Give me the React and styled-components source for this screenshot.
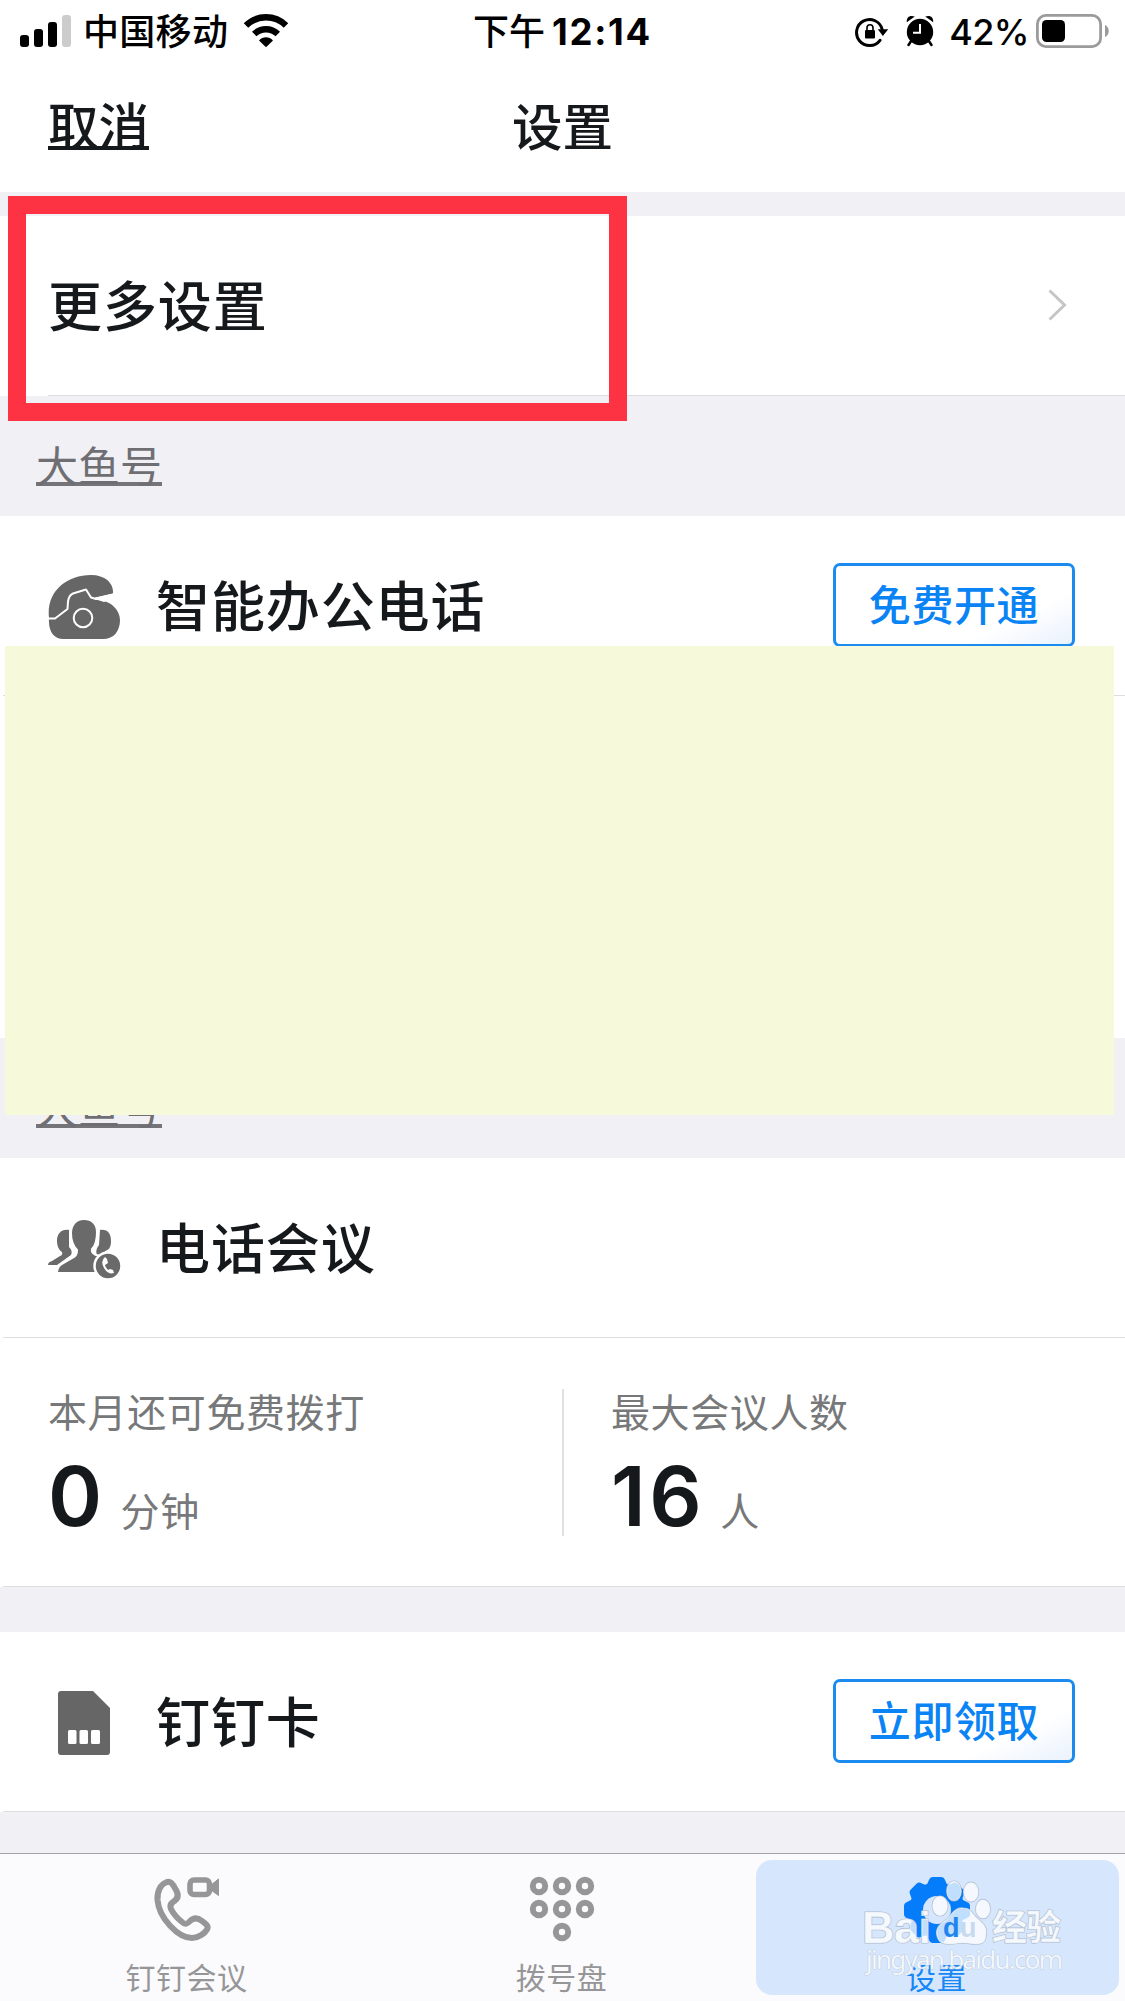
import styled, { createGlobalStyle } from "styled-components"

const GlobalStyle = createGlobalStyle`
    *{
        box-sizing: border-box;
        margin: 0;
        padding: 0;
    }

    body{
        background-color: #f0f0f5;
        color: #16191c;
        font-family: Inter, "Noto Sans CJK SC", sans-serif;
        overflow: hidden;
    }
`

const Screen = styled.div`
    position: relative;
    width: 1125px;
    height: 2001px;
    overflow: hidden;
    display: flex;
    flex-direction: column;
    background-color: #f0f0f5;

    svg{
        display: block;
        flex-shrink: 0;
    }
`

const StatusBar = styled.header`
    height: 60px;
    display: grid;
    grid-template-columns: 1fr auto 1fr;
    background-color: #fff;
    color: #000;
    font-size: 36px;
    font-weight: 500;
    line-height: 60px;
    white-space: nowrap;
`

const StatusSide = styled.div`
    display: flex;
    align-items: center;
    justify-content: ${({ $end }) => $end ? "flex-end" : "flex-start"};
    padding: ${({ $end }) => $end ? "0 15px 0 0" : "0 0 0 20px"};
`

const Carrier = styled.span`
    width: 146px;
    margin: 0 14px 0 11px;
    padding-top: 2px;
    letter-spacing: .3px;
`

const Clock = styled.div`
    display: flex;
    gap: 7px;
    padding-top: 2px;

    b{
        font-size: 36.5px;
        font-weight: 700;
        letter-spacing: 1.7px;
    }
`

const Battery = styled.span`
    margin: 0 7px 0 15px;
    padding-top: 2px;
    font-size: 36px;
    letter-spacing: -.6px;
`

const NavBar = styled.nav`
    height: 132px;
    display: grid;
    grid-template-columns: 1fr auto 1fr;
    padding: 0 48px;
    background-color: #fff;
    font-size: 50.5px;
    font-weight: 500;
    line-height: 136px;

    h1{
        font-size: 50.5px;
        font-weight: 500;
    }
`

const Cancel = styled.a`
    justify-self: start;
    align-self: start;
    height: 59px;
    margin-top: 31px;
    line-height: 72px;
    border-bottom: 4px solid #16191c;
`

const Gap = styled.div`
    height: ${({ $size }) => $size}px;
    flex-shrink: 0;
`

const Row = styled.div`
    height: 180px;
    display: flex;
    align-items: center;
    flex-shrink: 0;
    padding: 0 50px 0 48px;
    background: linear-gradient(#dedee0, #dedee0) ${({ $inset }) => $inset}px 179px / 100% 1px no-repeat #fff;
`

const RowTitle = styled.h2`
    flex: 1;
    margin-left: ${({ $icon }) => $icon ? "35px" : "0"};
    padding-top: 3px;
    font-size: 54px;
    font-weight: 500;
    letter-spacing: .9px;
    line-height: 80px;
`

const IconSlot = styled.div`
    width: 73px;
    display: flex;
    justify-content: center;
    padding-top: 1px;
`

const OutlineButton = styled.button`
    width: 242px;
    height: 84px;
    margin-bottom: 2px;
    border: 3px solid #1b8bf0;
    border-radius: 7px;
    background: linear-gradient(155deg, #fff 72%, #eaf2fd 100%);
    color: #0a84f5;
    font-family: inherit;
    font-size: 42px;
    font-weight: 500;
    letter-spacing: .6px;
    line-height: 76px;
    padding-top: 2px;
`

const SectionHead = styled.div`
    height: 120px;
    flex-shrink: 0;
    padding: 40px 36px 0;

    span{
        display: inline-block;
        height: 50px;
        border-bottom: 4px solid #747479;
        color: #6e6e73;
        font-size: 42px;
        line-height: 62px;
    }
`

const HiddenPanel = styled.div`
    height: 342px;
    flex-shrink: 0;
    background-color: #fff;
`

const Stats = styled.div`
    height: 249px;
    flex-shrink: 0;
    display: flex;
    align-items: center;
    padding-bottom: 1px;
    background: linear-gradient(#dedee0, #dedee0) 3px 248px / 100% 1px no-repeat #fff;
`

const Stat = styled.div`
    width: 562px;
    height: 147px;
    padding-left: 48px;

    & + &{
        padding-left: 47px;
        border-left: 2px solid #e0e0e2;
    }

    .label{
        color: #77787a;
        font-size: 39px;
        letter-spacing: .6px;
        line-height: 48px;
    }

    .value{
        display: flex;
        align-items: baseline;
        gap: 15px;
        height: 99px;
        line-height: 119px;
    }

    b{
        font-size: 82px;
        font-weight: 600;
        letter-spacing: 3.5px;
    }

    small{
        color: #77787a;
        font-size: 39px;
        letter-spacing: .6px;
    }
`

const TabBar = styled.footer`
    height: 148px;
    flex-shrink: 0;
    display: grid;
    grid-template-columns: repeat(3, 1fr);
    margin-top: auto;
    border-top: 1px solid #a3a3a8;
    background-color: #fbfbfd;
`

const Tab = styled.div`
    display: flex;
    flex-direction: column;
    align-items: center;
    height: 135px;
    margin: ${({ $active }) => $active ? "6px 6px 0" : "6px 0 0"};
    padding: 16px 2px 0 0;
    gap: 12px;
    border-radius: 16px;
    background-color: ${({ $active }) => $active ? "#d6e7fd" : "transparent"};
    color: ${({ $active }) => $active ? "#1787f5" : "#969698"};
    font-size: 30px;
    letter-spacing: .5px;
    line-height: 44px;
`

const Highlight = styled.div`
    position: absolute;
    left: 8px;
    top: 196px;
    width: 619px;
    height: 225px;
    border: 18px solid #fd3242;
`

const Cover = styled.div`
    position: absolute;
    left: 5px;
    top: 646px;
    width: 1109px;
    height: 469px;
    background-color: #f6f9da;
`

const Watermark = styled.svg`
    position: absolute;
    left: 856px;
    top: 1870px;
`

const SignalIcon = () => (
    <svg width="52" height="34" viewBox="0 0 52 34">
        <rect x="0" y="21" width="9" height="12" rx="3" />
        <rect x="14" y="15" width="9" height="18" rx="3" />
        <rect x="28" y="8" width="9" height="25" rx="3" />
        <rect x="42" y="1" width="9" height="32" rx="3" fill="#ccc" />
    </svg>
)

const WifiIcon = () => (
    <svg width="46" height="34" viewBox="0 0 46 34">
        <path d="M3 11.5a28.5 28.5 0 0 1 40 0" fill="none" stroke="#000" strokeWidth="6.4" />
        <path d="M11.2 20a17 17 0 0 1 23.6 0" fill="none" stroke="#000" strokeWidth="6.4" />
        <path d="M16 26.5c4-4.3 10-4.3 14 0l-6.2 6c-.5.5-1.1.5-1.6 0z" />
    </svg>
)

const LockIcon = () => (
    <svg width="51" height="34" viewBox="0 0 51 34">
        <path d="M25 26.3A13 13 0 1 1 27.2 15.5" fill="none" stroke="#000" strokeWidth="3" strokeLinecap="round" />
        <path d="M22.8 15.2H33.2L27.9 22z" />
        <rect x="10" y="16" width="10" height="8.5" rx="1.3" />
        <path d="M12 16.5v-2.700a3 3 0 0 1 6 0v2.7" fill="none" stroke="#000" strokeWidth="1.6" />
    </svg>
)

const AlarmIcon = () => (
    <svg width="28" height="34" viewBox="0 0 28 34">
        <path d="M5.5 26.5L2.5 31M22.5 26.5l3 4.5" stroke="#000" strokeWidth="2.5" strokeLinecap="round" />
        <circle cx="14" cy="18" r="13.2" />
        <path d="M.8 8.2C.3 2.500 4.5.8 8.8 2.6zM27.2 8.2C27.7 2.500 23.5.8 19.2 2.6z" />
        <path d="M.5 10L10.500 3.200M27.500 10L17.500 3.200" stroke="#fff" strokeWidth="1.4" />
        <path d="M14 10v8.800H7" fill="none" stroke="#fff" strokeWidth="2" />
    </svg>
)

const BatteryIcon = () => (
    <svg width="74" height="34" viewBox="0 0 74 34">
        <rect x="1.4" y="1.4" width="63.2" height="31.2" rx="8.5" fill="none" stroke="#9b9b9b" strokeWidth="2.8" />
        <rect x="6" y="6" width="23" height="22" rx="4.5" />
        <path d="M69 11c5 2 5 10 0 12z" fill="#9b9b9b" />
    </svg>
)

const ChevronIcon = () => (
    <svg width="28" height="38" viewBox="0 0 28 38">
        <path d="M2.5 3.5L17.5 18L2.5 32.5" fill="none" stroke="#c5c5c8" strokeWidth="3" />
    </svg>
)

const DeskPhoneIcon = () => (
    <svg width="73" height="64" viewBox="0 0 73 64">
        <path d="M1 43C-2 17 18 0 43 0C58 0 66 9 65 18.5L47 22.5V24.500C63 25 72 35 72 45C72 56 66 64 55 64H15C7 64 0 58 1 43z" fill="#666" />
        <path d="M65 18.500L45 23.500L56 27Q64 25 66 20z" fill="#fff" />
        <path d="M0 43.5H7L19.5 34L20 26.5Q21 20 25 18.5L38 14.500L43 22.5L48 24L64 20" fill="none" stroke="#fff" strokeWidth="2" strokeLinejoin="round" />
        <circle cx="35" cy="43" r="9.3" fill="none" stroke="#fff" strokeWidth="2" />
    </svg>
)

const PeopleIcon = () => (
    <svg width="73" height="60" viewBox="0 0 73 60">
        <g fill="#6a6a6a">
            <path d="M21 11C13 10 9 15 9 22C9 27 11 31 14 33Q15 36 12 37L4 42Q0 43 0 46H9L23 36Q25 32 21 28z" />
            <path d="M52 11C60 10 63 15 63 22C63 28 61 31 57 32Q56 34 58 36L50 38Q46 32 51 26z" />
        </g>
        <path d="M36 0C27 0 23 7 23 14C23 22 25 27 29 31Q29 36 26 38L14 45Q9 48 9 54H62V38L48 36Q43 34 44 30C48 26 49 20 49 13C49 5 44 0 36 0z" fill="#6a6a6a" stroke="#fff" strokeWidth="2" />
        <circle cx="60" cy="47" r="13.5" fill="#6a6a6a" stroke="#fff" strokeWidth="2.5" />
        <path d="M57 38Q52 42 56 49Q60 56 66 54L65 51L62 50L60 51Q57 48 57 46L60 44L59 40z" fill="#fff" />
    </svg>
)

const SimIcon = () => (
    <svg width="54" height="66" viewBox="0 0 54 66">
        <path d="M3 1H35L52 18V62Q52 65 49 65H3Q0 65 0 62V4Q0 1 3 1z" fill="#666" />
        <rect x="10" y="40" width="8.5" height="14" rx="1.5" fill="#fff" />
        <rect x="21.5" y="40" width="8.5" height="14" rx="1.5" fill="#fff" />
        <rect x="33" y="40" width="9" height="14" rx="1.5" fill="#fff" />
    </svg>
)

const CallTabIcon = () => (
    <svg width="66" height="68" viewBox="0 0 66 68" fill="none" stroke="#969698" strokeLinejoin="round">
        <path d="M12 6.5C7 8 3 15 3.5 24C5 42 24 62 38 62C45 62 51 57 53 53.5C55 50 52 48 48 45C43 41 39 42 36 45Q32 50 28 46C23 42 19 37 17 33Q15 29 19 26C24 23 25 19 22 14C19 8 16 4 12 6.5z" strokeWidth="6" />
        <rect x="36" y="4" width="19.5" height="14.5" rx="4" strokeWidth="5.6" />
        <path d="M57 9L64.5 3V19.5L57 14z" fill="#969698" strokeWidth="1" />
    </svg>
)

const dots = [[10, 10], [33, 10], [56, 10], [10, 33], [33, 33], [56, 33], [33, 56]]

const DialTabIcon = () => (
    <svg width="66" height="68" viewBox="0 0 66 68">
        {dots.map(([x, y]) => (
            <circle key={`${x}-${y}`} cx={x} cy={y} r="6.2" fill="none" stroke="#969698" strokeWidth="6" />
        ))}
    </svg>
)

const GearTabIcon = () => (
    <svg width="66" height="68" viewBox="0 0 66 68">
        <g fill="#057dfb">
            <circle cx="33" cy="34" r="27.5" />
            {[0, 45, 90, 135, 180, 225, 270, 315].map((angle) => (
                <path key={angle} transform={`rotate(${angle} 33 34)`} d="M20 11Q24 8 25 4Q26 1 29 1H37Q40 1 41 4Q42 8 46 11z" />
            ))}
        </g>
        <circle cx="33" cy="34" r="14" fill="#d6e7fd" />
    </svg>
)

const BaiduMark = () => (
    <Watermark width="220" height="112" viewBox="0 0 220 112">
        <g fill="#fff" fillOpacity=".75" stroke="#aebccf" strokeWidth="1.2" paintOrder="stroke">
            <text x="6" y="73" fontFamily="Liberation Sans" fontWeight="700" fontSize="45" textLength="69">Bai</text>
            <path d="M107 38C99 37 95 45 91 49C84 54 79 58 81 66C84 77 94 74 107 73C120 74 129 77 130 66C132 57 127 53 121 48C116 43 115 38 107 38z" />
            <ellipse cx="84" cy="36" rx="7.8" ry="10" />
            <ellipse cx="98" cy="21" rx="7.3" ry="10" />
            <ellipse cx="115" cy="22" rx="7.5" ry="9.8" />
            <ellipse cx="127" cy="39" rx="7.3" ry="9.6" />
            <text x="136" y="70" fontFamily="Noto Sans CJK SC" fontWeight="700" fontSize="35" textLength="69">经验</text>
            <text x="10" y="99" fontFamily="Noto Sans" fontSize="26" strokeWidth=".6" textLength="197">jingyan.baidu.com</text>
        </g>
        <text x="87" y="67" fill="#2184ed" fontFamily="Liberation Sans" fontWeight="700" fontSize="27">d</text>
        <text x="104" y="67" fill="#c8d9ef" fontFamily="Liberation Sans" fontWeight="700" fontSize="27">u</text>
    </Watermark>
)

const tabs = [
    { id: 1, text: "钉钉会议", icon: <CallTabIcon /> },
    { id: 2, text: "拨号盘", icon: <DialTabIcon /> },
    { id: 3, text: "设置", icon: <GearTabIcon />, active: true },
]

const stats = [
    { id: 1, label: "本月还可免费拨打", value: 0, unit: "分钟" },
    { id: 2, label: "最大会议人数", value: 16, unit: "人" },
]

const FeatureRow = ({ icon, title, action }) => (
    <Row $inset={3}>
        <IconSlot>{icon}</IconSlot>
        <RowTitle $icon>{title}</RowTitle>
        {action && <OutlineButton>{action}</OutlineButton>}
    </Row>
)

const App = () => {
    return (
        <>
            <GlobalStyle />
            <Screen>
                <StatusBar>
                    <StatusSide>
                        <SignalIcon />
                        <Carrier>中国移动</Carrier>
                        <WifiIcon />
                    </StatusSide>
                    <Clock>下午<b>12:14</b></Clock>
                    <StatusSide $end>
                        <LockIcon />
                        <AlarmIcon />
                        <Battery>42%</Battery>
                        <BatteryIcon />
                    </StatusSide>
                </StatusBar>
                <NavBar>
                    <Cancel>取消</Cancel>
                    <h1>设置</h1>
                </NavBar>
                <Gap $size={24} />
                <Row $inset={48}>
                    <RowTitle>更多设置</RowTitle>
                    <ChevronIcon />
                </Row>
                <SectionHead><span>大鱼号</span></SectionHead>
                <FeatureRow icon={<DeskPhoneIcon />} title="智能办公电话" action="免费开通" />
                <HiddenPanel />
                <SectionHead><span>大鱼号</span></SectionHead>
                <FeatureRow icon={<PeopleIcon />} title="电话会议" />
                <Stats>
                    {stats.map((item) => (
                        <Stat key={item.id}>
                            <div className="label">{item.label}</div>
                            <div className="value">
                                <b>{item.value}</b>
                                <small>{item.unit}</small>
                            </div>
                        </Stat>
                    ))}
                </Stats>
                <Gap $size={45} />
                <FeatureRow icon={<SimIcon />} title="钉钉卡" action="立即领取" />
                <TabBar>
                    {tabs.map((tab) => (
                        <Tab key={tab.id} $active={tab.active}>
                            {tab.icon}
                            <span>{tab.text}</span>
                        </Tab>
                    ))}
                </TabBar>
                <Cover />
                <Highlight />
                <BaiduMark />
            </Screen>
        </>
    )
}

export default App
